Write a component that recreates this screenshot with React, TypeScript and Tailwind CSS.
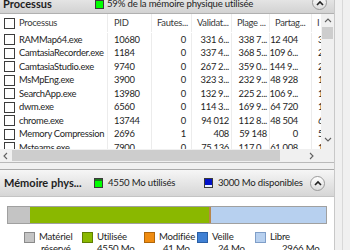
import React from "react";

type Row = {
  name: string;
  pid: string;
  faults: string;
  commit: string;
  ws: string;
  shared: string;
  next: string;
};

const ROWS: Row[] = [
  { name: "RAMMap64.exe", pid: "10680", faults: "0", commit: "331 6...", ws: "338 7...", shared: "12 404", next: "3" },
  { name: "CamtasiaRecorder.exe", pid: "1184", faults: "0", commit: "337 4...", ws: "368 5...", shared: "109 6...", next: "2" },
  { name: "CamtasiaStudio.exe", pid: "9740", faults: "0", commit: "267 2...", ws: "359 0...", shared: "144 9...", next: "2" },
  { name: "MsMpEng.exe", pid: "3900", faults: "0", commit: "323 3...", ws: "232 9...", shared: "48 928", next: "1" },
  { name: "SearchApp.exe", pid: "13980", faults: "0", commit: "132 9...", ws: "225 2...", shared: "106 9...", next: "1" },
  { name: "dwm.exe", pid: "6560", faults: "0", commit: "114 3...", ws: "169 9...", shared: "64 720", next: "1" },
  { name: "chrome.exe", pid: "13744", faults: "0", commit: "94 012", ws: "112 8...", shared: "48 504", next: "6" },
  { name: "Memory Compression", pid: "2696", faults: "1", commit: "408", ws: "59 148", shared: "0", next: "5" },
  { name: "Msteams.exe", pid: "7900", faults: "0", commit: "75 136", ws: "117 0...", shared: "61 008", next: "1" },
];

const LEGEND = [
  { label: "Matériel", value: "réservé", color: "bg-[#c4c4c4]", border: "border-[#8a8a8a]", width: "w-[58px]", valuePad: "pl-[2px]" },
  { label: "Utilisée", value: "4550 Mo", color: "bg-[#8ab800]", border: "border-[#5f7f00]", width: "w-[62px]", valuePad: "pl-0" },
  { label: "Modifiée", value: "41 Mo", color: "bg-[#f08c10]", border: "border-[#b0660a]", width: "w-[53px]", valuePad: "pl-[4px]" },
  { label: "Veille", value: "24 Mo", color: "bg-[#3f80d4]", border: "border-[#2a5fa5]", width: "w-[58px]", valuePad: "pl-[6px]" },
  { label: "Libre", value: "2966 Mo", color: "bg-[#b7d0ef]", border: "border-[#7f9ec8]", width: "w-[60px]", valuePad: "pl-[12px]" },
];

const cell = "flex h-full shrink-0 items-center overflow-hidden whitespace-nowrap border-r border-[#ececec]";

function Chevron({ dir }: { dir: "up" | "down" | "left" | "right" }) {
  const d = {
    up: "M1 5 L4 2 L7 5",
    down: "M1 2 L4 5 L7 2",
    left: "M5 1 L2 4 L5 7",
    right: "M2 1 L5 4 L2 7",
  }[dir];
  return (
    <svg width="8" height="8" viewBox="0 0 8 8" className="shrink-0">
      <path d={d} fill="none" stroke="#606060" strokeWidth="1.1" />
    </svg>
  );
}

function CheckBox() {
  return <div className="h-[11px] w-[11px] shrink-0 border border-[#3c3c3c] bg-white" />;
}

function RoundButton() {
  return (
    <div className="flex h-[15px] w-[15px] items-center justify-center rounded-full border border-[#9a9a9a] bg-gradient-to-b from-white to-[#dcdcdc]">
      <svg width="8" height="6" viewBox="0 0 8 6">
        <path d="M1 5 L4 2 L7 5" fill="none" stroke="#222" strokeWidth="1.6" />
      </svg>
    </div>
  );
}

function ProcessPanel() {
  return (
    <div className="flex flex-col border-b border-[#b9b9b9] bg-white">
      <div className="h-[14px] overflow-hidden border-b border-[#b0b0b0] bg-gradient-to-b from-[#e4e4e4] to-[#d2d2d2]">
        <div className="-mt-[5px] flex h-[19px] items-center whitespace-nowrap">
          <span className="w-[95px] shrink-0 pl-[3px] text-[11px] font-bold">Processus</span>
          <div className="h-[9px] w-[9px] shrink-0 border border-[#3a3a3a] bg-[#00ff00]" />
          <span className="ml-[3px] text-[9.6px] tracking-[-0.2px]">59% de la mémoire physique utilisée</span>
          <div className="ml-auto mr-[7px] -mt-[4px]">
            <RoundButton />
          </div>
        </div>
      </div>
      <div className="flex h-[135px]">
        <div className="w-[322px] overflow-hidden text-[9.4px] tracking-[-0.3px]">
          <div className="flex h-[18px] items-center text-[#3a3a3a]">
            <div className={`${cell} w-[108px] pl-[4px]`}>
              <CheckBox />
              <span className="ml-[4px]">Processus</span>
            </div>
            <div className={`${cell} w-[44px] pl-[6px]`}>PID</div>
            <div className={`${cell} w-[40px] pl-[5px]`}>Fautes...</div>
            <div className={`${cell} w-[40px] pl-[5px]`}>Validat...</div>
            <div className={`${cell} w-[38px] pl-[5px]`}>Plage ...</div>
            <div className={`${cell} w-[42px] pl-[5px]`}>Partag...</div>
            <div className={`${cell} w-[40px] border-r-0 pl-[5px]`}>I</div>
          </div>
          <div className="pt-[1px]">
            {ROWS.map((r) => (
              <div key={r.name} className="flex h-[13.5px] items-center">
                <div className={`${cell} w-[108px] pl-[4px]`}>
                  <CheckBox />
                  <span className="ml-[4px]">{r.name}</span>
                </div>
                <div className={`${cell} w-[44px] pl-[6px]`}>{r.pid}</div>
                <div className={`${cell} w-[40px] justify-end pr-[5px]`}>{r.faults}</div>
                <div className={`${cell} w-[40px] justify-end pr-[2px]`}>{r.commit}</div>
                <div className={`${cell} w-[38px] justify-end pr-[2px]`}>{r.ws}</div>
                <div className={`${cell} w-[42px] justify-end pr-[13px]`}>{r.shared}</div>
                <div className={`${cell} w-[40px] border-r-0 pl-[6px]`}>{r.next}</div>
              </div>
            ))}
          </div>
        </div>
        <div className="flex w-[13px] flex-col items-center bg-[#f0f0f0]">
          <div className="mt-[3px]">
            <Chevron dir="up" />
          </div>
          <div className="mt-[2px] h-[12px] w-[11px] bg-[#cdcdcd]" />
          <div className="mb-[5px] mt-auto">
            <Chevron dir="down" />
          </div>
        </div>
      </div>
      <div className="flex h-[13px]">
        <div className="flex w-[322px] items-center bg-[#f0f0f0]">
          <div className="ml-[2px]">
            <Chevron dir="left" />
          </div>
          <div className="ml-[2px] h-[11px] w-[268px] bg-[#cdcdcd]" />
          <div className="ml-auto mr-[5px]">
            <Chevron dir="right" />
          </div>
        </div>
        <div className="w-[13px] bg-[#f0f0f0]" />
      </div>
    </div>
  );
}

function MemoryPanel() {
  return (
    <div className="mt-[6px] flex flex-1 flex-col border-t border-[#a9a9a9] bg-white">
      <div className="flex h-[27px] items-center whitespace-nowrap border-b border-[#c4c4c4] bg-gradient-to-b from-[#f6f6f6] to-[#d6d6d6]">
        <span className="w-[94px] shrink-0 pl-[4px] text-[11px] font-bold">Mémoire phys...</span>
        <div className="flex h-[10px] w-[9px] shrink-0 flex-col border border-[#3a3a3a] bg-[#00ff00]">
          <div className="h-[2px] bg-[#1a7a1a]" />
        </div>
        <span className="ml-[5px] w-[96px] shrink-0 text-[9.6px] tracking-[-0.2px]">4550 Mo utilisés</span>
        <div className="flex h-[10px] w-[9px] shrink-0 flex-col border border-[#3a3a3a] bg-[#e8f0ff]">
          <div className="h-[6px] bg-[#0010c8]" />
        </div>
        <span className="ml-[5px] text-[9.6px] tracking-[-0.2px]">3000 Mo disponibles</span>
        <div className="ml-auto mr-[9px]">
          <RoundButton />
        </div>
      </div>
      <div className="mx-[7px] mt-[9px] flex h-[18px] border border-[#a0a0a0]">
        <div className="w-[22px] bg-[#c4c4c4]" />
        <div className="w-[179px] bg-[#8ab800]" />
        <div className="w-[2px] bg-[#b8864a]" />
        <div className="flex-1 bg-[#b7d0ef]" />
      </div>
      <div className="mt-[7px] flex whitespace-nowrap pl-[24px] text-[9.6px] leading-[12px] tracking-[-0.2px]">
        {LEGEND.map((l) => (
          <div key={l.label} className={`flex shrink-0 ${l.width}`}>
            <div className={`mt-px h-[11px] w-[11px] shrink-0 border ${l.border} ${l.color}`} />
            <div className="ml-[4px] flex flex-col">
              <span>{l.label}</span>
              <span className={l.valuePad}>{l.value}</span>
            </div>
          </div>
        ))}
      </div>
    </div>
  );
}

export default function App() {
  return (
    <div className="flex h-[250px] w-[350px] overflow-hidden bg-[#f0f0f0] font-['Lato',sans-serif] text-[#1e1e1e]">
      <div className="flex w-[335px] shrink-0 flex-col border-r border-[#c8c8c8]">
        <ProcessPanel />
        <MemoryPanel />
      </div>
      <div className="w-[7px]" />
      <div className="flex-1 border-l border-[#d8d8d8]" />
    </div>
  );
}
